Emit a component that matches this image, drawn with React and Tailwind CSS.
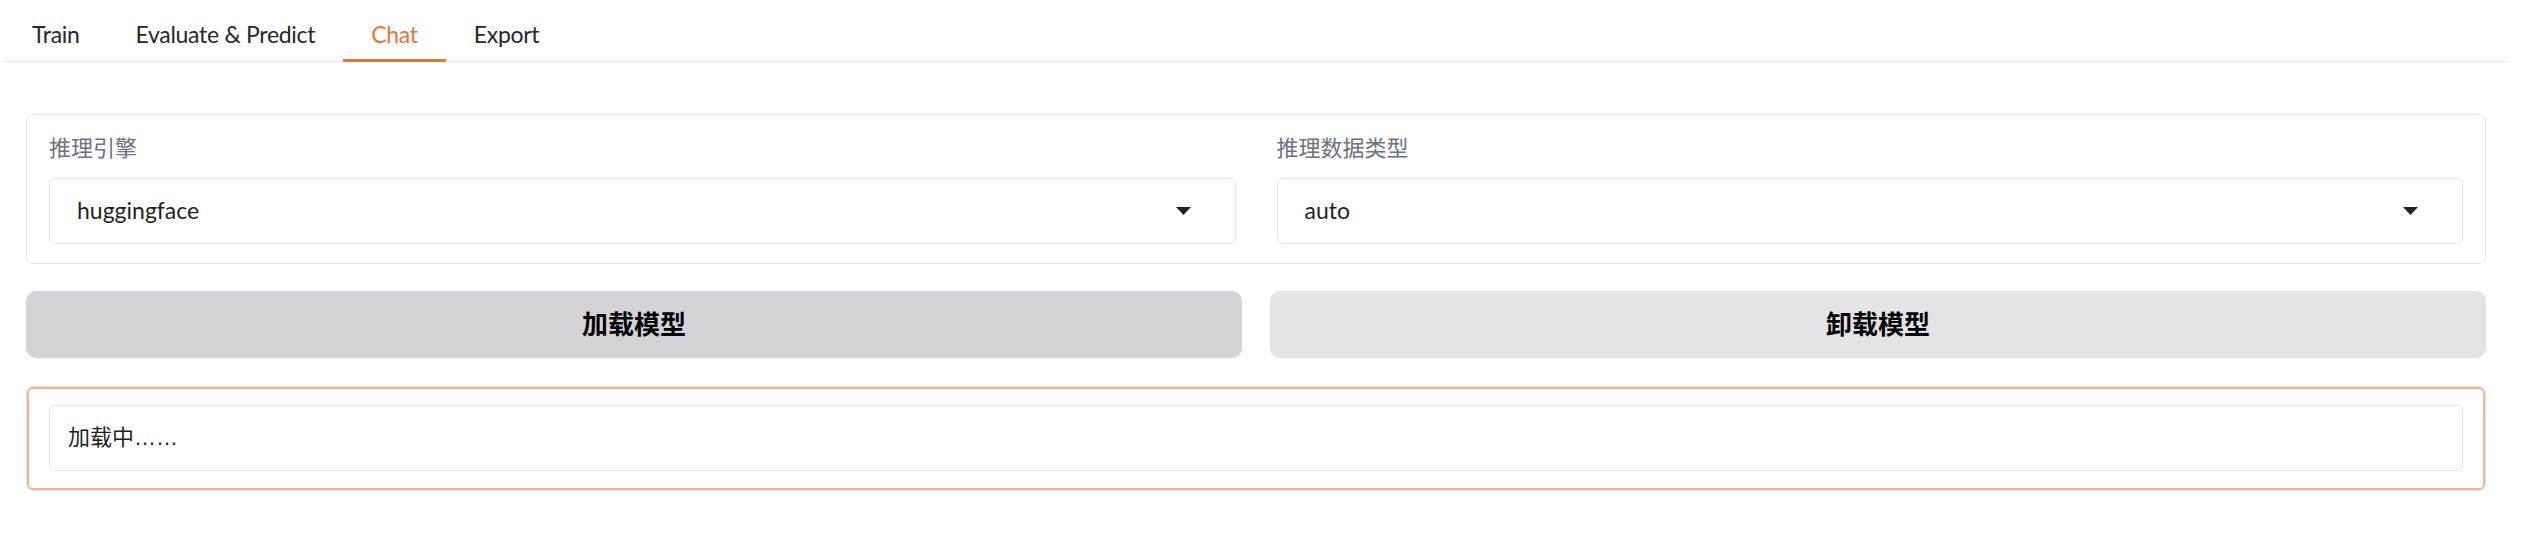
import React from "react";

const FONT = { fontFamily: 'Lato, "Noto Sans CJK SC", sans-serif' };

function Arrow() {
  return (
    <svg width="15" height="8" viewBox="0 0 15 8" className="shrink-0">
      <polygon points="0,0 15,0 7.5,8" fill="#222222" />
    </svg>
  );
}

function Dropdown({ label, value }) {
  return (
    <div className="flex flex-col">
      <div className="text-[22px] leading-[30px] text-[#6b7280] mb-[15px]">{label}</div>
      <div className="h-[66px] border border-[#e4e4e7] rounded-[6px] bg-white flex items-center pl-[27px] pr-[44px]">
        <span className="flex-1 text-[23px] leading-[1.2] text-[#1f1f1f]">{value}</span>
        <Arrow />
      </div>
    </div>
  );
}

export default function App() {
  const tabs = ["Train", "Evaluate & Predict", "Chat", "Export"];
  return (
    <div className="w-[2536px] h-[538px] bg-white" style={FONT}>
      <div className="ml-[4px] mr-[29px] flex border-b border-[#e5e5e5] h-[62px]">
        {tabs.map((t) => (
          <div
            key={t}
            className={
              "relative px-[28px] pt-[21px] text-[23px] leading-[1.2] tracking-[-0.3px] " +
              (t === "Chat" ? "text-[#ea7434]" : "text-[#27272a]")
            }
          >
            {t}
            {t === "Chat" && (
              <span className="absolute left-0 right-0 bottom-[-1px] h-[3px] bg-[#ea7434]" />
            )}
          </div>
        ))}
      </div>

      <div className="ml-[26px] mr-[50px] mt-[52px] flex flex-col">
        <div className="border border-[#e4e4e7] rounded-[7px] px-[22px] pt-[18px] pb-[19px] grid grid-cols-2 gap-x-[41px]">
          <Dropdown label="推理引擎" value="huggingface" />
          <Dropdown label="推理数据类型" value="auto" />
        </div>

        <div className="mt-[27px] grid grid-cols-2 gap-x-[28px]">
          <div className="h-[67px] rounded-[10px] bg-[#d4d4d8] flex items-center justify-center text-[26px] font-bold text-black">
            加载模型
          </div>
          <div className="h-[67px] rounded-[10px] bg-[#e4e4e7] flex items-center justify-center text-[26px] font-bold text-black">
            卸载模型
          </div>
        </div>

        <div className="mt-[28px] border border-[#e4e4e7] rounded-[7px] shadow-[inset_0_0_0_2px_#f2b48c] px-[22px] pt-[18px] pb-[19px]">
          <div className="h-[66px] border border-[#e4e4e7] rounded-[6px] bg-white flex items-center pl-[18px]">
            <span className="text-[22px] leading-[1.2] text-[#1f1f1f]">
              加载中<span style={{ fontFamily: '"Liberation Sans", sans-serif' }}>……</span>
            </span>
          </div>
        </div>
      </div>
    </div>
  );
}
